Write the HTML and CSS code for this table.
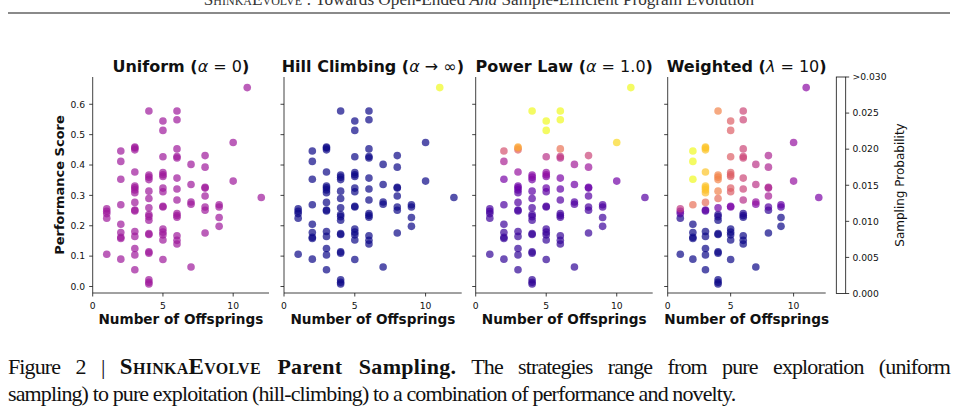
FILE: index.html
```html
<!DOCTYPE html>
<html lang="en">
<head>
<meta charset="utf-8">
<title>ShinkaEvolve Parent Sampling</title>
<link rel="stylesheet" href="styles.css">
</head>
<body>
<header class="running-head">
  <p class="running-title"><span class="sc">ShinkaEvolve</span> : Towards Open-Ended <i>And</i> Sample-Efficient Program Evolution</p>
  <div class="rule"></div>
</header>
<figure class="figure">
  <div class="plots" id="plots"></div>
  <figcaption class="caption"><span class="cap-line cap-justify">Figure 2 | <b><span class="sc">ShinkaEvolve</span> Parent Sampling.</b> The strategies range from pure exploration (uniform</span><span class="cap-line">sampling) to pure exploitation (hill-climbing) to a combination of performance and novelty.</span></figcaption>
</figure>
<script src="script.js"></script>
</body>
</html>
```

FILE: styles.css
```css
html, body {
  margin: 0;
  padding: 0;
  background: #ffffff;
}
body {
  width: 958px;
  height: 415px;
  overflow: hidden;
  font-family: "Liberation Serif", "Times New Roman", serif;
  color: #111;
}
.running-head {
  display: flow-root;
  height: 14px;
  padding: 0 8px;
}
.running-title {
  margin: -8.7px 0 0 0;
  font-size: 17.2px;
  line-height: 17px;
  text-align: center;
  color: #333;
  white-space: nowrap;
}
.sc {
  font-variant: small-caps;
}
.rule {
  margin-top: 3.2px;
  height: 2px;
  background: #8a8a8a;
}
.figure {
  margin: 36px 0 0 0;
  padding: 0;
}
.plots {
  display: flex;
  align-items: flex-start;
  padding-left: 44px;
  height: 285px;
}
.plots svg {
  display: block;
  overflow: visible;
  flex: none;
}
.caption {
  margin: 18px 8px 0 8px;
  font-size: 22px;
  line-height: 27px;
  letter-spacing: -0.88px;
  color: #111;
}
.cap-line {
  display: block;
  white-space: nowrap;
}
.cap-justify {
  text-align: justify;
  text-align-last: justify;
}
.caption b {
  font-weight: bold;
  letter-spacing: 0.3px;
}
.caption b .sc {
  font-size: 23px;
}
.ax-text {
  font-family: "DejaVu Sans", sans-serif;
  fill: #111;
}
.title {
  font-size: 16px;
  font-weight: bold;
}
.title .math {
  font-weight: normal;
}
.title .math-it {
  font-weight: normal;
  font-style: italic;
}
.tick-label {
  font-size: 9.2px;
}
.axis-label {
  font-size: 13.6px;
  font-weight: bold;
}
.ylabel {
  font-size: 13px;
  font-weight: bold;
}
.cbar-label {
  font-size: 12px;
}
.spine {
  stroke: #111;
  stroke-width: 0.8;
  fill: none;
}
```

FILE: script.js
```js
(function () {
  var NS = 'http://www.w3.org/2000/svg';
  var data = [
    [1,0.256],[1,0.248],[1,0.240],[1,0.225],[1,0.106],
    [2,0.446],[2,0.412],[2,0.353],[2,0.269],[2,0.205],[2,0.178],[2,0.162],[2,0.158],[2,0.090],
    [3,0.459],[3,0.456],[3,0.450],[3,0.377],[3,0.331],[3,0.325],[3,0.318],[3,0.309],[3,0.277],[3,0.252],[3,0.249],[3,0.181],[3,0.165],[3,0.125],[3,0.104],[3,0.055],
    [4,0.578],[4,0.367],[4,0.360],[4,0.352],[4,0.314],[4,0.290],[4,0.259],[4,0.237],[4,0.230],[4,0.218],[4,0.174],[4,0.171],[4,0.114],[4,0.110],[4,0.022],[4,0.014],[4,0.008],
    [5,0.545],[5,0.514],[5,0.427],[5,0.375],[5,0.368],[5,0.362],[5,0.324],[5,0.312],[5,0.264],[5,0.262],[5,0.189],[5,0.179],[5,0.170],[5,0.153],[5,0.089],
    [6,0.578],[6,0.549],[6,0.453],[6,0.428],[6,0.423],[6,0.357],[6,0.321],[6,0.285],[6,0.240],[6,0.234],[6,0.228],[6,0.167],[6,0.152],[6,0.140],
    [7,0.402],[7,0.336],[7,0.278],[7,0.271],[7,0.064],
    [8,0.431],[8,0.393],[8,0.327],[8,0.324],[8,0.298],[8,0.262],[8,0.251],[8,0.176],
    [9,0.269],[9,0.262],[9,0.227],[9,0.198],
    [10,0.474],[10,0.347],
    [11,0.655],
    [12,0.293]
  ];
  var STOPS = ['#0d0887','#41049d','#6a00a8','#8f0da4','#b12a90','#cc4778','#e16462','#f2844b','#fca636','#fcce25','#f0f921'];
  function hex(h) { return [parseInt(h.substr(1,2),16), parseInt(h.substr(3,2),16), parseInt(h.substr(5,2),16)]; }
  function plasma(v) {
    v = Math.max(0, Math.min(1, v));
    var i = Math.min(9, Math.floor(v * 10));
    var t = v * 10 - i;
    var a = hex(STOPS[i]), b = hex(STOPS[i + 1]);
    var c = [0,1,2].map(function (k) { return Math.round(a[k] + (b[k] - a[k]) * t); });
    return 'rgb(' + c.join(',') + ')';
  }
  function el(tag, attrs, parent, text) {
    var e = document.createElementNS(NS, tag);
    for (var k in attrs) e.setAttribute(k, attrs[k]);
    if (text !== undefined) e.textContent = text;
    if (parent) parent.appendChild(e);
    return e;
  }

  var N = data.length;
  var H = 0; for (var k = 1; k <= N; k++) H += 1 / k;
  var order = data.map(function (d, i) { return i; }).sort(function (a, b) { return data[b][1] - data[a][1]; });
  var rank = []; order.forEach(function (idx, r) { rank[idx] = r + 1; });
  var topIdx = order[0];

  var values = {
    uniform: data.map(function () { return (1 / N) / 0.03; }),
    hill: data.map(function (d, i) { return i === topIdx ? 1 : 0; }),
    power: data.map(function (d, i) { return (1 / (rank[i] * H)) / 0.03; }),
    weighted: data.map(function (d) {
      var s = 1 / (1 + Math.exp(-95 * (d[1] - 0.267)));
      return 3.5 * s / (1 + d[0]);
    })
  };

  var TOP = 27, BOTTOM = 243, Y0 = 236.5, YS = 303.7, XMAX = 12.55;
  function yPix(v) { return Y0 - v * YS; }

  var panels = [
    { w: 232, left: 48.7, aw: 176.3, key: 'uniform', yl: true,
      title: [['Uniform (', ''], ['\u03b1', 'math-it'], [' = 0', 'math'], [')', '']] },
    { w: 192, left: 8, aw: 177.7, key: 'hill',
      title: [['Hill Climbing (', ''], ['\u03b1', 'math-it'], [' \u2192 \u221e', 'math'], [')', '']] },
    { w: 192, left: 7.7, aw: 177, key: 'power',
      title: [['Power Law (', ''], ['\u03b1', 'math-it'], [' = 1.0', 'math'], [')', '']] },
    { w: 172, left: 7.7, aw: 158, key: 'weighted',
      title: [['Weighted (', ''], ['\u03bb', 'math-it'], [' = 10', 'math'], [')', '']] }
  ];

  var host = document.getElementById('plots');

  panels.forEach(function (p) {
    var svg = el('svg', { width: p.w, height: 285, viewBox: '0 0 ' + p.w + ' 285', 'class': 'panel' }, host);
    var ux = p.aw / XMAX;
    var cx = p.left + p.aw / 2;
    var t = el('text', { x: cx, y: 21.5, 'text-anchor': 'middle', 'class': 'ax-text title' }, svg);
    p.title.forEach(function (part) {
      el('tspan', part[1] ? { 'class': part[1] } : {}, t, part[0]);
    });
    var vals = values[p.key];
    var idxs = data.map(function (d, i) { return i; }).sort(function (a, b) { return vals[a] - vals[b]; });
    idxs.forEach(function (i) {
      el('circle', {
        cx: (p.left + data[i][0] * ux).toFixed(2),
        cy: yPix(data[i][1]).toFixed(2),
        r: 3.8,
        fill: plasma(vals[i]),
        'fill-opacity': 0.7
      }, svg);
    });
    el('path', { d: 'M' + p.left + ' ' + TOP + 'V' + BOTTOM + 'H' + (p.left + p.aw), 'class': 'spine' }, svg);
    for (var j = 0; j <= 6; j++) {
      var yy = yPix(j / 10);
      el('line', { x1: p.left - 3.5, x2: p.left, y1: yy, y2: yy, 'class': 'spine' }, svg);
      if (p.yl) {
        el('text', { x: p.left - 7.6, y: yy + 3.3, 'text-anchor': 'end', 'class': 'ax-text tick-label' }, svg, (j / 10).toFixed(1));
      }
    }
    [0, 5, 10].forEach(function (xv) {
      var xx = p.left + xv * ux;
      el('line', { x1: xx, x2: xx, y1: BOTTOM, y2: BOTTOM + 3.5, 'class': 'spine' }, svg);
      el('text', { x: xx, y: 259, 'text-anchor': 'middle', 'class': 'ax-text tick-label' }, svg, String(xv));
    });
    el('text', { x: cx, y: 273.5, 'text-anchor': 'middle', 'class': 'ax-text axis-label' }, svg, 'Number of Offsprings');
    if (p.yl) {
      el('text', { x: 0, y: 0, 'text-anchor': 'middle', transform: 'translate(19.5 135) rotate(-90)', 'class': 'ax-text ylabel' }, svg, 'Performance Score');
    }
  });

  var cb = el('svg', { width: 90, height: 285, viewBox: '0 0 90 285', 'class': 'colorbar' }, host);
  var defs = el('defs', {}, cb);
  var g = el('linearGradient', { id: 'plasmaGrad', x1: 0, y1: 1, x2: 0, y2: 0 }, defs);
  STOPS.forEach(function (c, i) {
    el('stop', { offset: (i / 10), 'stop-color': c, 'stop-opacity': 0.7 }, g);
  });
  el('rect', { x: 4.3, y: TOP, width: 9.4, height: BOTTOM - TOP + 0.5, fill: 'url(#plasmaGrad)', 'class': 'spine' }, cb);
  var labels = ['0.000', '0.005', '0.010', '0.015', '0.020', '0.025', '>0.030'];
  for (var m = 0; m <= 6; m++) {
    var yc = BOTTOM + 0.5 - m * ((BOTTOM + 0.5 - TOP) / 6);
    el('line', { x1: 13.7, x2: 17.2, y1: yc, y2: yc, 'class': 'spine' }, cb);
    el('text', { x: 20.5, y: yc + 3.3, 'class': 'ax-text tick-label' }, cb, labels[m]);
  }
  el('text', { x: 0, y: 0, 'text-anchor': 'middle', transform: 'translate(72 135) rotate(-90)', 'class': 'ax-text cbar-label' }, cb, 'Sampling Probability');
})();
```
